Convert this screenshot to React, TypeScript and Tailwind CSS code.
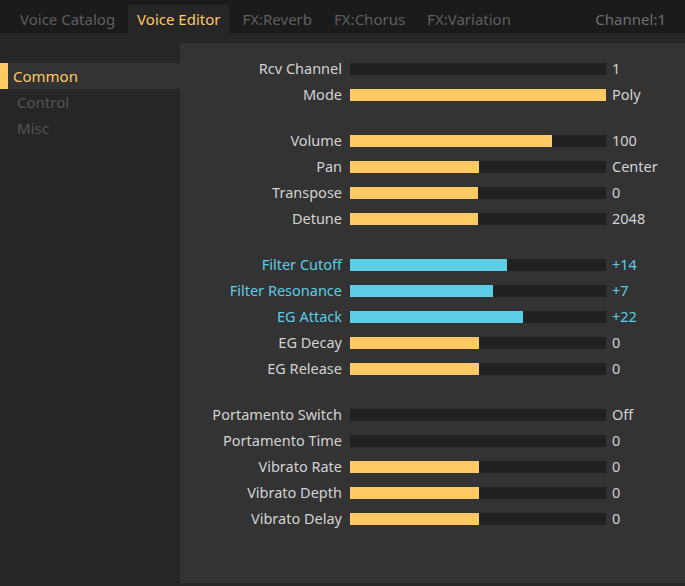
type Param = {
  label: string;
  value: string;
  fill: number; // px of 256
  accent?: boolean;
};

const groups: Param[][] = [
  [
    { label: "Rcv Channel", value: "1", fill: 0 },
    { label: "Mode", value: "Poly", fill: 256 },
  ],
  [
    { label: "Volume", value: "100", fill: 202 },
    { label: "Pan", value: "Center", fill: 129 },
    { label: "Transpose", value: "0", fill: 128 },
    { label: "Detune", value: "2048", fill: 128 },
  ],
  [
    { label: "Filter Cutoff", value: "+14", fill: 157, accent: true },
    { label: "Filter Resonance", value: "+7", fill: 143, accent: true },
    { label: "EG Attack", value: "+22", fill: 173, accent: true },
    { label: "EG Decay", value: "0", fill: 129 },
    { label: "EG Release", value: "0", fill: 129 },
  ],
  [
    { label: "Portamento Switch", value: "Off", fill: 0 },
    { label: "Portamento Time", value: "0", fill: 0 },
    { label: "Vibrato Rate", value: "0", fill: 129 },
    { label: "Vibrato Depth", value: "0", fill: 129 },
    { label: "Vibrato Delay", value: "0", fill: 129 },
  ],
];

const tabs = ["Voice Catalog", "Voice Editor", "FX:Reverb", "FX:Chorus", "FX:Variation"];

function Row({ p }: { p: Param }) {
  const text = p.accent ? "text-[#5ccde6]" : "text-[#d2d2d2]";
  return (
    <div className="flex items-center h-[26px]">
      <span className={`w-[162px] text-right ${text}`}>{p.label}</span>
      <div className="ml-[8px] w-[256px] h-[12px] bg-[#212121]">
        <div
          className={`h-full ${p.accent ? "bg-[#5ccde6]" : "bg-[#ffc964]"}`}
          style={{ width: p.fill }}
        />
      </div>
      <span className={`ml-[6px] ${text}`}>{p.value}</span>
    </div>
  );
}

export default function App() {
  return (
    <div
      className="w-[685px] h-[586px] flex flex-col bg-[#262626] text-[14.5px] overflow-hidden"
      style={{ fontFamily: '"Noto Sans", "Open Sans", sans-serif' }}
    >
      {/* Tabs */}
      <div className="h-[33px] bg-[#1b1b1b] flex items-end pl-[11px] pr-[19px] shrink-0 text-[15px]">
        {tabs.map((t) => (
          <div
            key={t}
            className={`h-[28px] px-[9px] mr-[4px] flex items-center ${
              t === "Voice Editor" ? "bg-[#262626] text-[#ffc964]" : "text-[#5f5f5f]"
            }`}
          >
            {t}
          </div>
        ))}
        <div className="ml-auto h-[28px] flex items-center text-[#6e6e6e]">Channel:1</div>
      </div>

      <div className="flex flex-1 pt-[10px]">
        {/* Sidebar */}
        <div className="w-[180px] pt-[20px] text-[15px]">
          <div className="h-[26px] bg-[#333333] flex items-center">
            <div className="w-[8px] h-full bg-[#ffc964]" />
            <span className="ml-[5px] text-[#ffc964]">Common</span>
          </div>
          <div className="h-[26px] flex items-center pl-[17px] text-[#555555]">Control</div>
          <div className="h-[26px] flex items-center pl-[17px] text-[#555555]">Misc</div>
        </div>

        {/* Panel */}
        <div className="flex-1 bg-[#333333] pt-[13px] mb-[3px] flex flex-col gap-[20px]">
          {groups.map((g, i) => (
            <div key={i} className="flex flex-col">
              {g.map((p) => (
                <Row key={p.label} p={p} />
              ))}
            </div>
          ))}
        </div>
      </div>
    </div>
  );
}
